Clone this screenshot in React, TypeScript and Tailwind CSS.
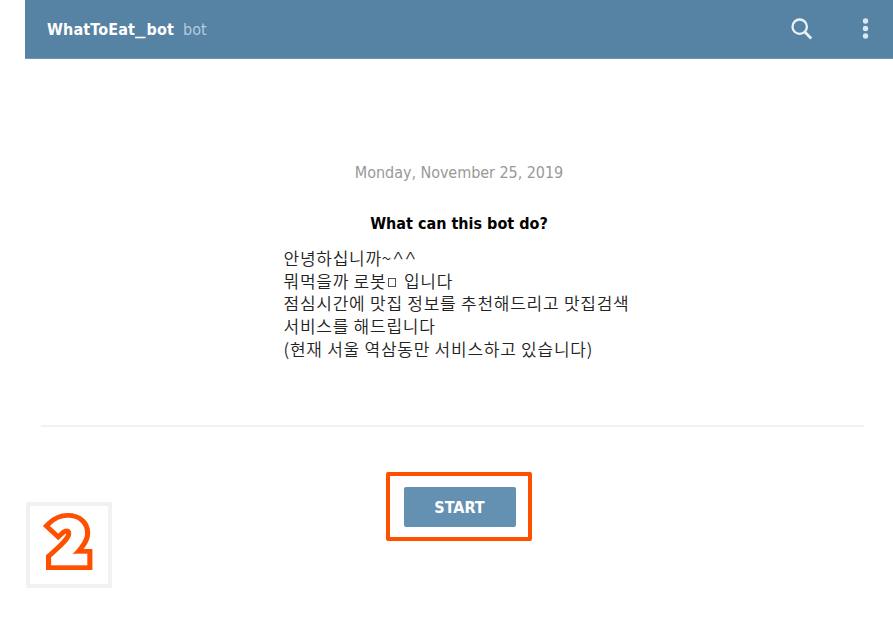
export default function App() {
  return (
    <div className="flex h-[637px] w-[893px] flex-col overflow-hidden bg-white font-['DejaVu_Sans_Condensed','DejaVu_Sans','Noto_Sans_CJK_KR',sans-serif] [font-stretch:condensed]">
      <header className="ml-[25px] flex h-[59px] shrink-0 items-center border-b border-[#7196b3] bg-[#5682a3] pl-[22px]">
        <span className="flex w-[136px] whitespace-nowrap pt-0.5 text-[16px] font-bold tracking-[0.15px] text-white">WhatToEat<span className="inline-block origin-left scale-x-[1.45] pr-1">_</span>bot</span>
        <span className="pt-0.5 text-[16px] text-[#b3cde0]">bot</span>
        <svg className="ml-auto mr-[46px] h-6 w-6" viewBox="0 0 24 24" fill="none" stroke="#e9f1f8" strokeWidth="2.3">
          <circle cx="10.7" cy="9.7" r="7.2" />
          <path d="M15.6 14.8L22.2 21.4" strokeWidth="2.8" />
        </svg>
        <svg className="mr-[22px] h-6 w-3" viewBox="0 0 12 24" fill="#d9e7f3">
          <circle cx="6.5" cy="4" r="2.7" />
          <circle cx="6.5" cy="11.5" r="2.7" />
          <circle cx="6.5" cy="19" r="2.7" />
        </svg>
      </header>
      <main className="ml-[25px] flex flex-col items-center">
        <p className="mt-[102px] text-[16px] leading-6 tracking-[-0.05px] text-[#999999]">Monday, November 25, 2019</p>
        <h1 className="mt-[27px] text-[16px] font-bold leading-6 text-black">What can this bot do?</h1>
        <div className="mt-[11px] w-[351px] whitespace-nowrap font-['Noto_Sans_CJK_KR',sans-serif] text-[17px] font-[350] leading-[22.7px] tracking-[0.75px] text-[#222]">
          <p className="h-[22.7px]">안녕하십니까~<span className="inline-block origin-left scale-x-[1.35] font-light tracking-normal">^^</span></p>
          <p className="h-[22.7px]">뭐먹을까 로봇<span className="ml-[2px] mr-[3px] inline-block h-[9px] w-2 -translate-y-[3px] border border-[#555] text-[7px] leading-[7px] text-transparent">□</span> 입니다</p>
          <p className="h-[22.7px]">점심시간에 맛집 정보를 추천해드리고 맛집검색</p>
          <p className="h-[22.7px]">서비스를 해드립니다</p>
          <p className="h-[22.7px]">(현재 서울 역삼동만 서비스하고 있습니다)</p>
        </div>
      </main>
      <hr className="ml-[41px] mt-[64.5px] w-[823px] border-t-2 border-[#f1f1f1]" />
      <footer className="flex pl-[26px]">
        <div className="mt-[75px] flex h-[86px] w-[86px] items-center justify-center rounded-[2px] border-4 border-[#f1f1f1]">
          <svg className="h-[78px] w-[78px] overflow-visible" viewBox="0 0 78 78" fontFamily="Noto Sans CJK KR" fontWeight="900" fontSize="60" textAnchor="middle" strokeLinejoin="miter">
            <text transform="translate(39.5 58) scale(1.08 1)" fill="none" stroke="#ff5000" strokeWidth="12">2</text>
            <text transform="translate(39.5 58) scale(1.08 1)" fill="#fff" stroke="#fff" strokeWidth="2.5" aria-hidden="true">2</text>
          </svg>
        </div>
        <div className="ml-[274px] mt-[45px] flex h-[69px] w-[146px] items-center justify-center rounded-[2px] border-4 border-[#ff5000] pl-px pt-px">
          <button className="h-10 w-28 rounded-[2px] bg-[#6490b1] pt-0.5 text-[16px] font-bold text-white">START</button>
        </div>
      </footer>
    </div>
  );
}
